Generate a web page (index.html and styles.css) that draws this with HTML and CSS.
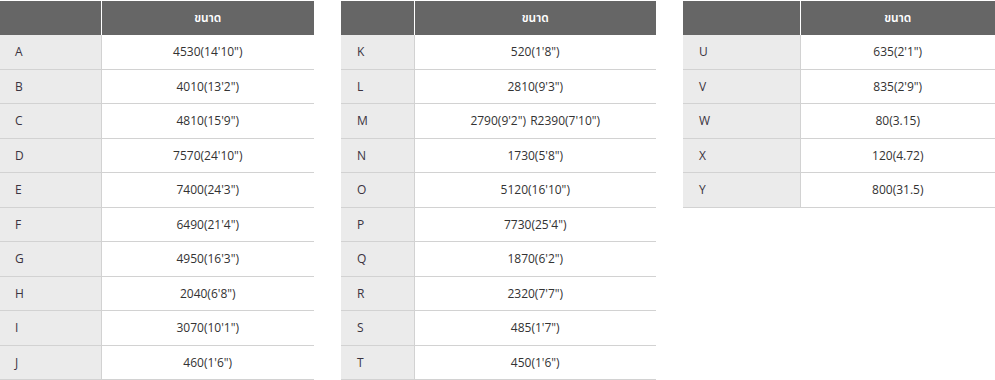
FILE: index.html
```html
<!DOCTYPE html>
<html lang="th">
<head>
<meta charset="utf-8">
<link rel="stylesheet" href="styles.css">
</head>
<body>
<div class="grid">
  <table class="spec t1">
    <colgroup><col class="c-key"><col></colgroup>
    <thead><tr><th></th><th>ขนาด</th></tr></thead>
    <tbody>
      <tr><td>A</td><td>4530(14'10")</td></tr>
      <tr><td>B</td><td>4010(13'2")</td></tr>
      <tr><td>C</td><td>4810(15'9")</td></tr>
      <tr><td>D</td><td>7570(24'10")</td></tr>
      <tr><td>E</td><td>7400(24'3")</td></tr>
      <tr><td>F</td><td>6490(21'4")</td></tr>
      <tr><td>G</td><td>4950(16'3")</td></tr>
      <tr><td>H</td><td>2040(6'8")</td></tr>
      <tr><td>I</td><td>3070(10'1")</td></tr>
      <tr><td>J</td><td>460(1'6")</td></tr>
    </tbody>
  </table>
  <table class="spec t2">
    <colgroup><col class="c-key"><col></colgroup>
    <thead><tr><th></th><th>ขนาด</th></tr></thead>
    <tbody>
      <tr><td>K</td><td>520(1'8")</td></tr>
      <tr><td>L</td><td>2810(9'3")</td></tr>
      <tr><td>M</td><td class="wide">2790(9'2") R2390(7'10")</td></tr>
      <tr><td>N</td><td>1730(5'8")</td></tr>
      <tr><td>O</td><td>5120(16'10")</td></tr>
      <tr><td>P</td><td>7730(25'4")</td></tr>
      <tr><td>Q</td><td>1870(6'2")</td></tr>
      <tr><td>R</td><td>2320(7'7")</td></tr>
      <tr><td>S</td><td>485(1'7")</td></tr>
      <tr><td>T</td><td>450(1'6")</td></tr>
    </tbody>
  </table>
  <table class="spec t3">
    <colgroup><col class="c-key"><col></colgroup>
    <thead><tr><th></th><th>ขนาด</th></tr></thead>
    <tbody>
      <tr><td>U</td><td>635(2'1")</td></tr>
      <tr><td>V</td><td>835(2'9")</td></tr>
      <tr><td>W</td><td>80(3.15)</td></tr>
      <tr><td>X</td><td>120(4.72)</td></tr>
      <tr><td>Y</td><td>800(31.5)</td></tr>
    </tbody>
  </table>
</div>
</body>
</html>
```
FILE: styles.css
```css
html, body {
  margin: 0;
  padding: 0;
  background: #fff;
}
body {
  padding-top: 1px;
  font-family: "Open Sans", "Noto Sans", "Noto Sans Thai", sans-serif;
  font-size: 12px;
  color: #333;
}
.grid {
  display: grid;
  grid-template-columns: 314px 315px 312px;
  column-gap: 27px;
  align-items: start;
}
.spec {
  width: 100%;
  border-collapse: collapse;
  border-spacing: 0;
  table-layout: fixed;
}
.t1 .c-key { width: 101px; }
.t2 .c-key { width: 73px; }
.t3 .c-key { width: 117px; }
.spec th {
  background: #666;
  color: #fff;
  font-weight: 600;
  height: 34px;
  padding: 0;
  text-align: center;
  vertical-align: middle;
}
.spec th:first-child {
  border-right: 1px solid #fff;
}
.spec td {
  height: 33.5px;
  padding: 0;
  border-bottom: 1px solid #d2d2d2;
  text-align: center;
  vertical-align: middle;
  box-sizing: content-box;
}
.spec td.wide {
  word-spacing: 1px;
}
.spec td:first-child {
  background: #ebebeb;
  border-right: 1px solid #d2d2d2;
  text-align: left;
  padding-left: 15px;
  color: #3a3340;
}
.t2 td:first-child,
.t3 td:first-child {
  padding-left: 16px;
}
```
